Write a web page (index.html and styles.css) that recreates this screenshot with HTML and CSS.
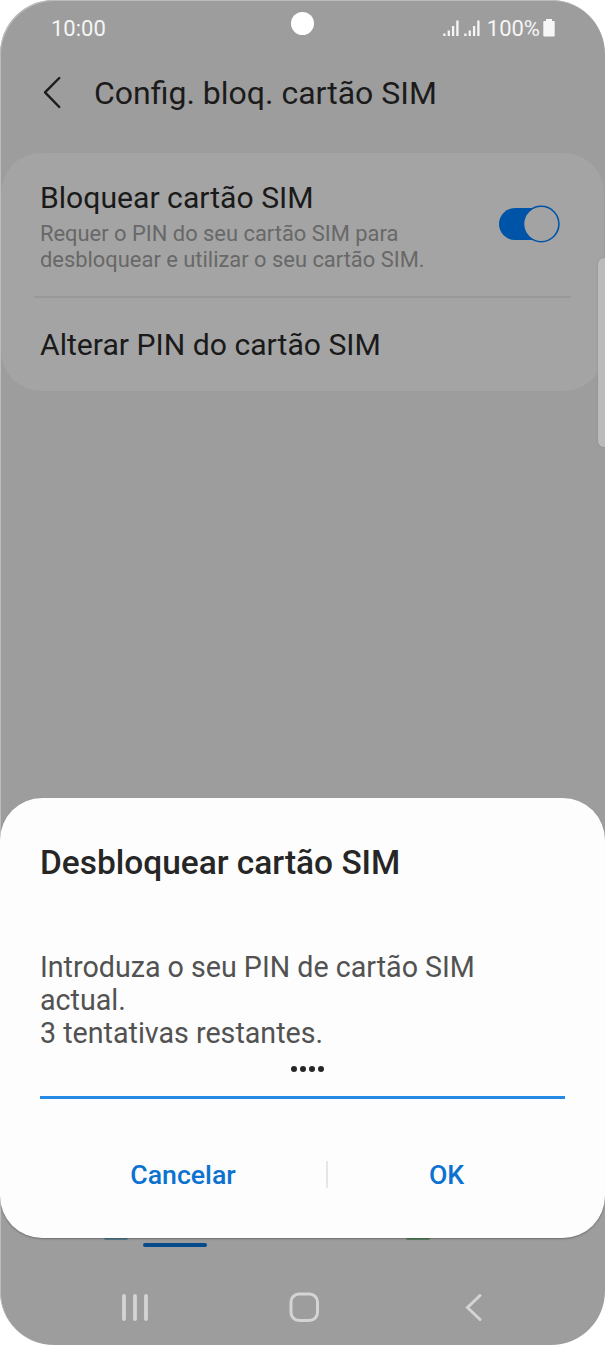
FILE: index.html
```html
<!DOCTYPE html>
<html lang="pt">
<head>
<meta charset="utf-8">
<title>Config. bloq. cartão SIM</title>
<link rel="stylesheet" href="styles.css">
</head>
<body>
<div class="phone">
  <div class="status">
    <span class="time">10:00</span>
    <div class="indicators">
      <svg class="signals" width="38" height="18" viewBox="0 0 38 18">
        <path d="M1.400 13.500v2.500M5.800 10.500v5.500M10.100 6v10M14.400 .5v15.500M22.400 13.500v2.500M26.800 10.500v5.500M31.100 6v10M35.400 .5v15.500"/>
      </svg>
      <span class="percent">100%</span>
      <svg class="battery" width="12" height="18" viewBox="0 0 12 18"><path d="M3 0h6v2h1.800q.9 0 .9.9v13.700q0 .9-.9.9H1.200q-.9 0-.9-.9V2.900q0-.9.9-.9H3z"/></svg>
    </div>
  </div>
  <div class="camera"></div>
  <header class="header">
    <svg class="back" width="20" height="34" viewBox="0 0 20 34"><path d="M17.300 2 3 16.300 17.300 31"/></svg>
    <h1 class="title">Config. bloq. cartão SIM</h1>
  </header>
  <section class="card">
    <div class="row lock">
      <div>
        <div class="label">Bloquear cartão SIM</div>
        <div class="hint">Requer o PIN do seu cartão SIM para<br>desbloquear e utilizar o seu cartão SIM.</div>
      </div>
      <svg class="toggle" width="62" height="38" viewBox="0 0 62 38">
        <rect class="track" x="0" y="3" width="52" height="32" rx="16"/>
        <circle class="knob" cx="42.200" cy="19" r="17.700"/>
      </svg>
    </div>
    <div class="row change"><span class="label">Alterar PIN do cartão SIM</span></div>
  </section>
  <div class="edge-panel"></div>
  <div class="behind">
    <i class="peek blue"></i><i class="tab"></i><i class="peek green"></i>
  </div>
  <nav class="nav">
    <svg width="605" height="36" viewBox="0 0 605 36">
      <path class="recents" d="M124 8v23M135 8v23M146 8v23"/>
      <rect class="home" x="291" y="6" width="26.500" height="26.500" rx="8"/>
      <path class="nav-back" d="M480 7.500 467.500 19.500 480 31.500"/>
    </svg>
  </nav>
  <div class="dialog">
    <h2 class="dialog-title">Desbloquear cartão SIM</h2>
    <p class="message">Introduza o seu PIN de cartão SIM<br>actual.<br>3 tentativas restantes.</p>
    <div class="pin"><i></i><i></i><i></i><i></i></div>
    <div class="actions">
      <button class="action">Cancelar</button>
      <i class="separator"></i>
      <button class="action">OK</button>
    </div>
  </div>
</div>
</body>
</html>
```
FILE: styles.css
```css
* { box-sizing: border-box; }
body { margin: 0; background: #fff; font-family: Roboto, sans-serif; }
svg { display: block; flex: none; }
.phone {
  position: relative;
  display: flex;
  flex-direction: column;
  width: 605px;
  height: 1345px;
  overflow: hidden;
  border-radius: 54px;
  background: #9d9d9d;
  box-shadow: inset 1px 1px 0 #bdbdbd;
}
.status {
  display: flex;
  justify-content: space-between;
  align-items: center;
  height: 57px;
  padding: 0 50px 0 51px;
  color: #f5f5f5;
  font-size: 22px;
}
.indicators { display: flex; align-items: center; }
.signals { fill: none; stroke: #f5f5f5; stroke-width: 2.300; margin-right: 6px; }
.battery { fill: #f7f7f7; margin: -1px 0 0 3px; }
.camera {
  position: absolute;
  left: 291px;
  top: 12px;
  width: 23px;
  height: 23px;
  border-radius: 50%;
  background: #fff;
}
.header { display: flex; align-items: center; height: 71px; padding-left: 42px; }
.back { fill: none; stroke: #1c1c1c; stroke-width: 2.400; stroke-linecap: round; stroke-linejoin: round; margin-right: 32px; }
.title { margin: 0; font-size: 32px; font-weight: 400; color: #1b1b1b; white-space: nowrap; }
.card {
  width: 603px;
  height: 238px;
  margin: 25px 0 0 1px;
  border-radius: 40px;
  background: #a4a4a4;
}
.row { display: flex; white-space: nowrap; }
.lock { justify-content: space-between; height: 143px; padding: 24px 43px 0 39px; }
.label { font-size: 30.150px; line-height: 41px; color: #1a1a1a; }
.hint { color: #686868; font-size: 21.900px; line-height: 26px; margin-top: 3px; }
.toggle { margin-top: 28px; }
.track { fill: #0054a8; }
.knob { fill: #a3a3a3; stroke: #0054a8; stroke-width: 1.600; }
.change { height: 95px; margin: 0 33px; padding: 26px 6px 0; border-top: 2px solid #999; }
.edge-panel {
  position: absolute;
  left: 598px;
  top: 258px;
  width: 14px;
  height: 189px;
  border-radius: 6px;
  background: #bbb;
  box-shadow: 0 0 2px #888;
}
.behind { display: flex; align-items: flex-start; margin-top: auto; height: 52px; padding-left: 104px; }
.peek { width: 24px; height: 4px; border-radius: 2px; }
.blue { background: #587c8f; }
.green { background: #5a805f; margin-left: 199px; }
.tab { width: 64px; height: 4px; margin: 7px 0 0 15px; border-radius: 2px; background: #074b8d; }
.nav { height: 57px; }
.nav svg { fill: none; stroke: #d4d4d4; stroke-width: 3; stroke-linecap: round; }
.nav .recents { stroke-width: 3.800; }
.dialog {
  position: absolute;
  left: 0;
  top: 798px;
  width: 605px;
  height: 440px;
  padding: 45px 40px 0;
  border-radius: 42px;
  background: #fdfdfd;
  box-shadow: 0 1px 2px rgba(0, 0, 0, .3);
  white-space: nowrap;
}
.dialog-title { margin: 0; font-size: 33.450px; line-height: 40px; font-weight: 500; color: #262626; }
.message { margin: 68px 0 0; font-size: 28.650px; line-height: 33.200px; color: #525252; }
.pin {
  display: flex;
  justify-content: center;
  gap: 3px;
  width: 525px;
  height: 48px;
  padding: 15px 0 0 9px;
  border-bottom: 3px solid #2589e6;
}
.pin i { width: 6px; height: 6px; border-radius: 50%; background: #262626; }
.actions { display: grid; grid-template-columns: 286px 2px 237px; align-items: center; margin-top: 52px; height: 48px; }
.action { border: 0; padding: 0; background: none; font: 500 26.700px/48px Roboto, sans-serif; color: #0b72d0; }
.separator { width: 2px; height: 27px; background: #e6e6e6; }
```
